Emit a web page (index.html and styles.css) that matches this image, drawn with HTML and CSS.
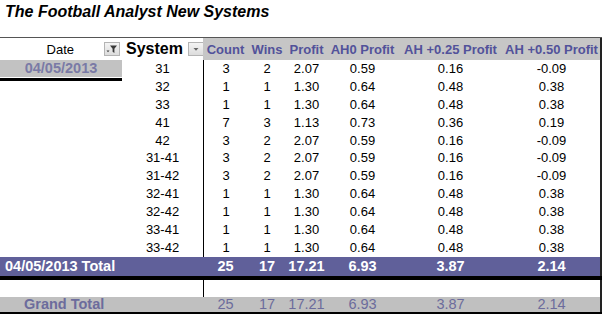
FILE: index.html
```html
<!DOCTYPE html>
<html>
<head>
<meta charset="utf-8">
<link rel="stylesheet" href="styles.css">
</head>
<body>
<div class="title">The Football Analyst New Systems</div>
<div class="pivot">
  <div class="h h-date"><span class="h-date-label">Date</span>
    <span class="btn"><svg width="14" height="12" viewBox="0 0 14 12"><path d="M5 2.5h7l-2.6 3.2v4.3l-1.8-1.3v-3z" fill="#3a3a3a"/><path d="M1.5 7.5h3l-1.5 1.8z" fill="#3a3a3a"/></svg></span>
  </div>
  <div class="h h-sys"><span class="sys-label">System</span>
    <span class="btn"><svg width="14" height="12" viewBox="0 0 14 12"><path d="M4.5 5h5l-2.5 2.8z" fill="#666"/></svg></span>
  </div>
  <div class="h hv">Count</div>
  <div class="h hv">Wins</div>
  <div class="h hv">Profit</div>
  <div class="h hv">AH0 Profit</div>
  <div class="h hv">AH +0.25 Profit</div>
  <div class="h hv last">AH +0.50 Profit</div>

  <div class="datecol"><div class="datelabel">04/05/2013</div><div class="dateline"></div></div>

  <div class="c sys">31</div><div class="c cnt">3</div><div class="c">2</div><div class="c">2.07</div><div class="c">0.59</div><div class="c">0.16</div><div class="c last">-0.09</div>
  <div class="c sys">32</div><div class="c cnt">1</div><div class="c">1</div><div class="c">1.30</div><div class="c">0.64</div><div class="c">0.48</div><div class="c last">0.38</div>
  <div class="c sys">33</div><div class="c cnt">1</div><div class="c">1</div><div class="c">1.30</div><div class="c">0.64</div><div class="c">0.48</div><div class="c last">0.38</div>
  <div class="c sys">41</div><div class="c cnt">7</div><div class="c">3</div><div class="c">1.13</div><div class="c">0.73</div><div class="c">0.36</div><div class="c last">0.19</div>
  <div class="c sys">42</div><div class="c cnt">3</div><div class="c">2</div><div class="c">2.07</div><div class="c">0.59</div><div class="c">0.16</div><div class="c last">-0.09</div>
  <div class="c sys">31-41</div><div class="c cnt">3</div><div class="c">2</div><div class="c">2.07</div><div class="c">0.59</div><div class="c">0.16</div><div class="c last">-0.09</div>
  <div class="c sys">31-42</div><div class="c cnt">3</div><div class="c">2</div><div class="c">2.07</div><div class="c">0.59</div><div class="c">0.16</div><div class="c last">-0.09</div>
  <div class="c sys">32-41</div><div class="c cnt">1</div><div class="c">1</div><div class="c">1.30</div><div class="c">0.64</div><div class="c">0.48</div><div class="c last">0.38</div>
  <div class="c sys">32-42</div><div class="c cnt">1</div><div class="c">1</div><div class="c">1.30</div><div class="c">0.64</div><div class="c">0.48</div><div class="c last">0.38</div>
  <div class="c sys">33-41</div><div class="c cnt">1</div><div class="c">1</div><div class="c">1.30</div><div class="c">0.64</div><div class="c">0.48</div><div class="c last">0.38</div>
  <div class="c sys">33-42</div><div class="c cnt">1</div><div class="c">1</div><div class="c">1.30</div><div class="c">0.64</div><div class="c">0.48</div><div class="c last">0.38</div>

  <div class="t tlabel">04/05/2013 Total</div><div class="t">25</div><div class="t">17</div><div class="t">17.21</div><div class="t">6.93</div><div class="t">3.87</div><div class="t last">2.14</div>
  <div class="bar"></div>

  <div class="blank span2"></div><div class="blank cnt"></div><div class="blank"></div><div class="blank"></div><div class="blank"></div><div class="blank"></div><div class="blank last"></div>

  <div class="g glabel">Grand Total</div><div class="g">25</div><div class="g">17</div><div class="g">17.21</div><div class="g">6.93</div><div class="g">3.87</div><div class="g last">2.14</div>
  <div class="bar2"></div>
</div>
</body>
</html>
```

FILE: styles.css
```css
body { margin: 0; background: #fff; font-family: "Liberation Sans", Arial, sans-serif; color: #000; }
.title { height: 37px; padding-left: 5px; box-sizing: border-box; padding-top: 2px; font-weight: bold; font-style: italic; font-size: 16px; line-height: 20px; }
.pivot {
  display: grid;
  width: 602px;
  grid-template-columns: 122px 81px 45px 38px 41px 71px 105px 99px;
  grid-template-rows: 22px repeat(11, 17.9px) 19.5px 4px 16.5px 15.5px 2px;
  border-top: 1px solid #555;
}
.pivot > div { box-sizing: border-box; min-width: 0; }
.last { border-right: 2px solid #222; }

.h { display: flex; align-items: center; white-space: nowrap; }
.h-date { justify-content: flex-end; padding-right: 2px; }
.h-date-label { font-size: 13px; margin-right: 30px; }
.h-sys { padding-left: 4px; }
.sys-label { font-size: 16px; font-weight: bold; margin-right: 5px; }
.btn { display: inline-flex; width: 16px; height: 14px; box-sizing: border-box; border: 1px solid #b4b4b4; background: linear-gradient(#f4f4f4, #dcdcdc); align-items: center; justify-content: center; }
.hv { background: #c6c6c6; color: #52529a; font-weight: bold; font-size: 13px; justify-content: center; }

.datecol { grid-column: 1; grid-row: 2 / span 11; }
.datelabel { height: 16.5px; background: #c2c2c2; color: #7a7aa6; font-weight: bold; font-size: 14.5px; line-height: 17px; text-align: center; }
.dateline { height: 2.5px; margin-top: 1.5px; background: #000; }

.c { font-size: 13px; text-align: center; line-height: 17.9px; }
.cnt { border-left: 1px solid #000; }

.t { background: #60609a; color: #fff; font-weight: bold; font-size: 14.5px; text-align: center; line-height: 19.5px; }
.tlabel { grid-column: span 2; text-align: left; padding-left: 5px; }
.bar { grid-column: 1 / -1; background: #000; }
.bar2 { grid-column: 1 / -1; background: #000; }
.span2 { grid-column: span 2; }

.g { background: #c0c0c0; color: #6c6c9c; font-size: 14.5px; text-align: center; line-height: 15.5px; }
.glabel { grid-column: span 2; text-align: left; padding-left: 24px; font-weight: bold; }
```
